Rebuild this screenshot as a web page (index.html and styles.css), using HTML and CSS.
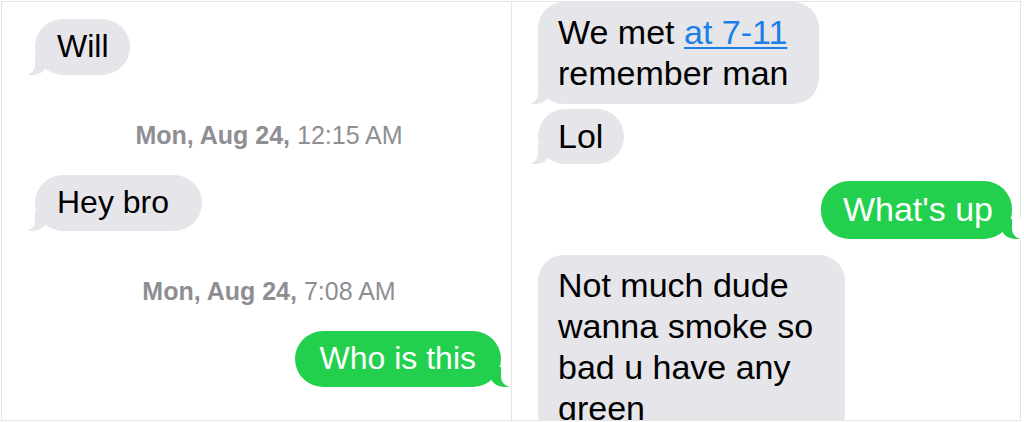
FILE: index.html
```html
<!DOCTYPE html>
<html lang="en">
<head>
  <meta charset="UTF-8" />
  <meta name="viewport" content="width=device-width,initial-scale=1" />
  <title>Messages</title>
  <link rel="stylesheet" href="styles.css">
</head>
<body>
  <div class="frame">
    <!-- left screenshot -->
    <section class="panel left">
      <div class="bubble in first">Will</div>
      <p class="stamp"><b>Mon, Aug 24,</b> 12:15 AM</p>
      <div class="bubble in wide">Hey bro</div>
      <p class="stamp"><b>Mon, Aug 24,</b> 7:08 AM</p>
      <div class="bubble out">Who is this</div>
    </section>

    <!-- right screenshot -->
    <section class="panel right">
      <div class="bubble in multi">We met <a href="#">at 7-11</a><br>remember man</div>
      <div class="bubble in lol">Lol</div>
      <div class="bubble out up">What's up</div>
      <div class="bubble in multi long">Not much dude<br>wanna smoke so<br>bad u have any<br>green</div>
    </section>
  </div>
</body>
</html>
```

FILE: styles.css
```css
* { box-sizing: border-box; }
body { margin: 0; background: #fff; font-family: "Liberation Sans", Arial, Helvetica, sans-serif; }

.frame {
  display: flex;
  width: 1020px;
  height: 420px;
  margin: 1px 0 0 1px;
  border: 1px solid #e4e4e4;
}
.panel { display: flex; flex-direction: column; align-items: flex-start; overflow-x: visible; overflow-y: clip; }
.panel.left { flex: 0 0 509px; padding: 17px 10px 0 33px; font-size: 32px; line-height: 37px; }
.panel.right { flex: 1; padding: 0 8px 0 26px; border-left: 1px solid #e4e4e4; font-size: 34px; line-height: 41px; }

.bubble {
  position: relative;
  flex: none;
  padding: 9px 21px 10px 22px;
  border-radius: 28px;
  color: #000;
  background: #e5e5ea;
}
.bubble.wide { padding-right: 33px; }
.bubble a { color: #1b7fe8; text-decoration: underline; text-decoration-thickness: 2px; text-underline-offset: 3px; }

/* tails */
.bubble::before, .bubble::after { content: ""; position: absolute; bottom: 0; height: 20px; }
.bubble.in::before { left: -7px; width: 20px; background: #e5e5ea; border-bottom-right-radius: 15px; }
.bubble.in::after { left: -10px; width: 10px; background: #fff; border-bottom-right-radius: 10px; }
.bubble.out { align-self: flex-end; padding: 9px 25px 10px 25px; color: #fff; background: #22d04e; }
.bubble.out::before { right: -8px; width: 20px; background: #22d04e; border-bottom-left-radius: 15px; }
.bubble.out::after { right: -10px; width: 10px; background: #fff; border-bottom-left-radius: 10px; }

.stamp {
  align-self: stretch;
  margin: 45px 0 25px;
  padding-left: 2px;
  text-align: center;
  font-size: 25px;
  line-height: 30px;
  color: #8e8e93;
}
.stamp b { font-weight: 700; }

.right .bubble { padding: 7px 21px 7px 20px; }
.right .bubble.multi { padding: 10px 30px 10px 20px; border-radius: 26px; }
.right .bubble.lol { margin-top: 5px; }
.right .bubble.up { margin-top: 17px; padding: 8px 19px 9px 22px; }
.right .bubble.long { margin-top: 16px; padding-right: 32px; }
```
